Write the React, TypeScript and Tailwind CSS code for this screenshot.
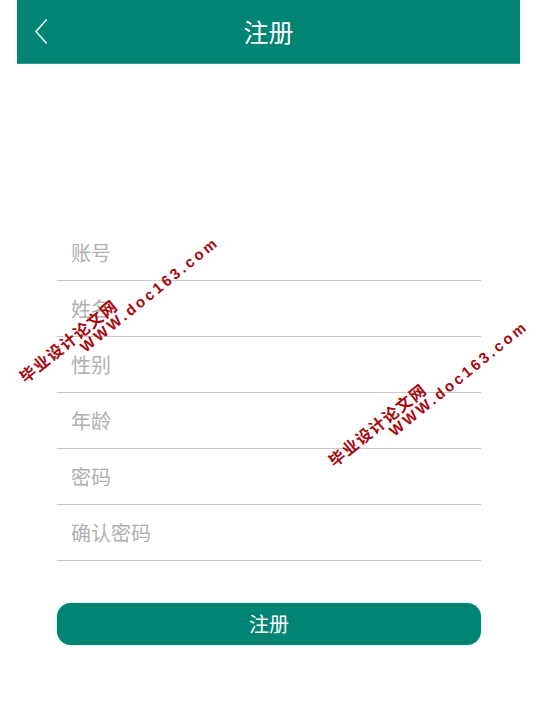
import React from "react";

const fields = ["账号", "姓名", "性别", "年龄", "密码", "确认密码"];
const cjk = { fontFamily: '"Noto Sans CJK SC", "Noto Sans", sans-serif' };

function Mark({ left, top }: { left: number; top: number }) {
  return (
    <div
      className="absolute w-[250px] origin-top-left rotate-[-39deg] text-[#a5080f] pointer-events-none"
      style={{ left, top, ...cjk }}
    >
      <div className="text-[16px] leading-[16px] font-bold tracking-[1.2px] whitespace-nowrap">毕业设计论文网</div>
      <div className="text-[15px] leading-[16px] font-bold tracking-[2.9px] pl-[66px] whitespace-nowrap" style={{ fontFamily: '"Liberation Sans", sans-serif' }}>
        WWW.doc163.com
      </div>
    </div>
  );
}

export default function App() {
  return (
    <div className="relative w-[548px] h-[708px] bg-white overflow-hidden" style={cjk}>
      <div className="ml-[17px] w-[503px] h-[64px] bg-[#028474] border-b border-[#2a9c8e] flex items-center relative">
        <svg className="absolute left-[17px] top-[19px]" width="14" height="26" viewBox="0 0 14 26" fill="none" stroke="#f2fbf9" strokeWidth="1.5">
          <path d="M12.7 0.5 L2 12.5 L12.7 24.5" />
        </svg>
        <div className="flex-1 text-center text-white text-[25px] leading-none -mt-[1px]">注册</div>
      </div>
      <div className="ml-[57px] w-[424px] mt-[161px] flex flex-col">
        {fields.map((f) => (
          <div key={f} className="h-[56px] border-b border-[#c8c8c8] pl-[14px] flex items-center text-[20px] text-[#b0b0b0]">
            {f}
          </div>
        ))}
        <button className="mt-[42px] h-[42px] rounded-[14px] bg-[#028474] text-white text-[20px] flex items-center justify-center shadow-[0_0_2px_rgba(80,200,190,0.6)]">
          注册
        </button>
      </div>
      <Mark left={16} top={372} />
      <Mark left={325} top={456} />
    </div>
  );
}
